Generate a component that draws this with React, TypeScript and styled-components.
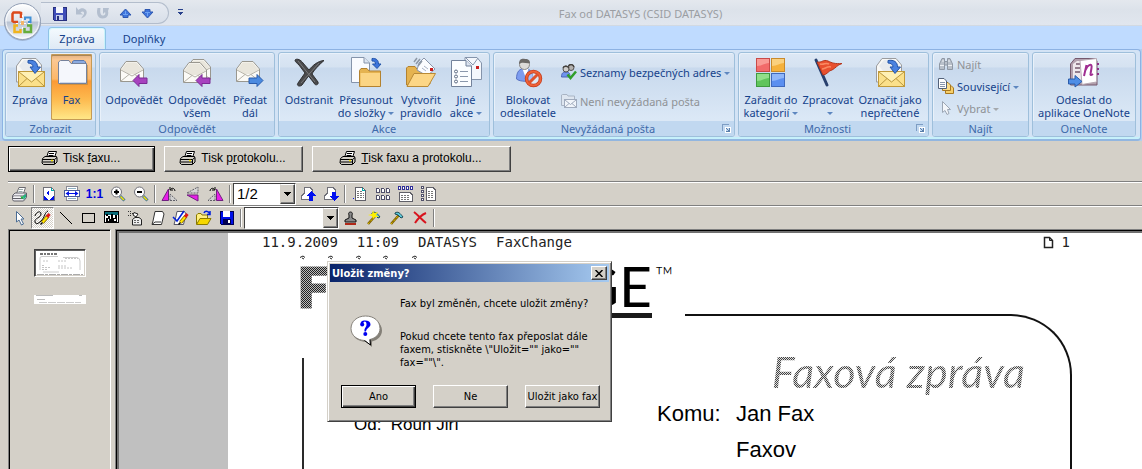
import React from "react";
import styled, { createGlobalStyle, css } from "styled-components";

const uiFont = '"Noto Sans", "Open Sans", sans-serif';
const dialogFont = '"DejaVu Sans Condensed", "Noto Sans", sans-serif';
const classicFont = '"Liberation Sans", Arial, sans-serif';
const face = "#d4d0c8";
const navy = "#15428b";

const GlobalStyle = createGlobalStyle`
  * { box-sizing: border-box; }
  body { margin: 0; background: ${face}; font-family: ${uiFont}; font-size: 11px; }
  button { font: inherit; color: inherit; margin: 0; }
  svg { display: block; flex: none; }
  p { margin: 0; }
`;

/* ---------- window frame ---------- */

const Window = styled.div`
  position: relative;
  display: flex;
  flex-direction: column;
  height: 100vh;
  overflow: hidden;
  background: ${face};
`;

const TitleBar = styled.header`
  display: flex;
  flex: none;
  height: 26px;
  padding: 2px 52px 1px 41px;
  background: linear-gradient(#e4e8ee, #dce2ea 40%, #e1e6ee);
  border-bottom: 1px solid #d2d9e2;
`;

const QuickAccess = styled.div`
  display: flex;
  align-items: center;
  flex: none;
  width: 128px;
  padding-left: 7px;
  border: 1px solid #b3bdcc;
  border-left: 0;
  border-radius: 0 12px 12px 0;
  background: linear-gradient(#e7ebf2, #d8dfe9);
`;

const QuickButton = styled.button`
  display: flex;
  align-items: center;
  justify-content: center;
  width: 22px;
  height: 20px;
  padding: 0;
  border: 0;
  background: none;
`;

const Title = styled.h1`
  flex: 1;
  margin: 0;
  font-size: 11px;
  font-weight: 400;
  line-height: 24px;
  text-align: center;
  color: #9b9ea3;
`;

const OfficeButton = styled.button`
  position: absolute;
  left: 3px;
  top: 2px;
  padding: 0;
  border: 0;
  background: none;
`;

const Tabs = styled.nav`
  display: flex;
  align-items: flex-end;
  flex: none;
  height: 23px;
  padding-left: 48px;
  background: #bfdbff;
`;

const Tab = styled.button<{ $active?: boolean }>`
  width: ${(p) => (p.$active ? 58 : 76)}px;
  height: 22px;
  padding: 0;
  border: 1px solid transparent;
  border-bottom: 0;
  border-radius: 4px 4px 0 0;
  background: none;
  color: ${navy};
  ${(p) =>
    p.$active &&
    css`
      border-color: #8fc3e6;
      background: linear-gradient(#f4fafe, #dfe9f5);
      box-shadow: inset 1px 1px 0 #d9fafd, inset -1px 0 0 #c9f3fb;
    `}
`;

/* ---------- ribbon ---------- */

const Ribbon = styled.section`
  display: flex;
  gap: 3px;
  flex: none;
  height: 92px;
  padding: 2px 3px 3px 2px;
  margin: 0 1px 0 2px;
  border: 1px solid #8db2e3;
  border-bottom: 2px solid #92b6e0;
  border-radius: 4px;
  background: #d3e3f5;
  box-shadow: inset 0 -2px 0 #c6f1fb, inset 1px 0 0 #d2f1fb;
`;

const RibbonBack = styled.div`
  flex: none;
  background: #b4cfee;
`;

const GroupBox = styled.div<{ $w: number }>`
  display: flex;
  flex-direction: column;
  flex: none;
  width: ${(p) => p.$w}px;
  height: 85px;
  border: 1px solid #9ebfdb;
  border-radius: 3px;
  background: linear-gradient(#dde8f5 0, #d5e2f1 14px, #c8d9ed 15px, #dbe8f6 66px);
  box-shadow: inset 1px 1px 0 #e9f1fa;
  overflow: hidden;
`;

const GroupBody = styled.div`
  display: flex;
  flex: 1;
  padding: 1px 3px;
`;

const GroupLabel = styled.div`
  display: flex;
  align-items: center;
  height: 15px;
  background: #c1d8f0;
  color: #3e6aaa;
  line-height: 15px;

  span {
    flex: 1;
    text-align: center;
  }

  button {
    padding: 0;
    margin-right: 3px;
    border: 0;
    background: none;
  }
`;

const BigButton = styled.button<{ $w: number; $on?: boolean }>`
  display: flex;
  flex-direction: column;
  align-items: center;
  flex: none;
  gap: 5px;
  width: ${(p) => p.$w}px;
  height: 66px;
  padding: 2px 0 0;
  border: 0;
  border-radius: 2px;
  background: none;
  color: ${navy};
  line-height: 13px;
  text-align: center;
  white-space: nowrap;
  ${(p) =>
    p.$on &&
    css`
      background: linear-gradient(#dfae80, #fbc893 6px, #fdb768 25px, #fb9a35 27px, #fdb94e 45px, #ffe98a);
      box-shadow: inset 0 0 0 1px #c59a55, inset 0 1px 0 1px #a98558;
    `}
`;

const SmallColumn = styled.div<{ $pad: number; $gap: number }>`
  display: flex;
  flex-direction: column;
  align-items: flex-start;
  gap: ${(p) => p.$gap}px;
  padding-top: ${(p) => p.$pad}px;
`;

const SmallButton = styled.button`
  display: flex;
  align-items: center;
  gap: 3px;
  height: 16px;
  padding: 0 2px;
  border: 0;
  background: none;
  color: ${navy};
  white-space: nowrap;

  &:disabled {
    color: #8f9296;
  }
`;

const Caret = styled.i<{ $dim?: boolean }>`
  display: inline-block;
  margin: 0 0 2px 3px;
  border: 3px solid transparent;
  border-top-color: ${(p) => (p.$dim ? "#a5a9ae" : "#5d86bf")};
  border-bottom: 0;
`;

/* ---------- print buttons and tool bars ---------- */

const raised = css`
  border: 1px solid;
  border-color: #fff #404040 #404040 #fff;
  box-shadow: inset -1px -1px 0 #808080;
  background: ${face};
`;

const raisedDefault = css`
  border: 1px solid #000;
  box-shadow: inset 1px 1px 0 #fff, inset -1px -1px 0 #404040, inset -2px -2px 0 #808080;
  background: ${face};
`;

const PrintRow = styled.div`
  display: flex;
  gap: 9px;
  flex: none;
  padding: 5px 8px 9px;
`;

const PrintButton = styled.button<{ $w: number; $default?: boolean }>`
  display: flex;
  align-items: center;
  justify-content: center;
  gap: 5px;
  width: ${(p) => p.$w}px;
  height: 26px;
  padding: 0 2px 2px 0;
  ${(p) => (p.$default ? raisedDefault : raised)}
  color: #000;
  font-family: ${classicFont};
  font-size: 12px;
`;

const ToolBar = styled.div`
  display: flex;
  align-items: center;
  flex: none;
  height: 24px;
  margin-left: 8px;
  border-top: 1px solid #808080;
  box-shadow: inset 0 1px 0 #fff;
`;

const Tool = styled.button<{ $on?: boolean }>`
  display: flex;
  align-items: center;
  justify-content: center;
  flex: none;
  width: 23px;
  height: 22px;
  padding: 0;
  border: 1px solid transparent;
  background: none;
  color: #0000e0;
  font-family: ${classicFont};
  font-size: 12px;
  font-weight: 700;
  ${(p) =>
    p.$on &&
    css`
      border-color: #808080 #fff #fff #808080;
      background: repeating-conic-gradient(#fff 0 25%, ${face} 0 50%) 0 0 / 2px 2px;
    `}
`;

const Divider = styled.span`
  flex: none;
  width: 2px;
  height: 18px;
  margin: 0 2px;
  border-left: 1px solid #808080;
  border-right: 1px solid #fff;
`;

const Combo = styled.label<{ $w: number }>`
  display: flex;
  flex: none;
  width: ${(p) => p.$w}px;
  height: 22px;
  border: 1px solid;
  border-color: #404040 #fff #fff #404040;
  background: #fff;

  select {
    flex: 1;
    min-width: 0;
    padding: 0 3px;
    border: 0;
    outline: 0;
    appearance: none;
    background: #fff;
    color: #000;
    font-family: ${classicFont};
    font-size: 15px;
  }

  span {
    display: flex;
    align-items: center;
    justify-content: center;
    width: 15px;
    ${raised}
    border-left-color: ${face};
  }
`;

/* ---------- document area ---------- */

const Workspace = styled.main`
  display: flex;
  flex: 1;
  gap: 4px;
  min-height: 0;
  padding-left: 8px;
`;

const ThumbPane = styled.aside`
  display: flex;
  flex-direction: column;
  align-items: center;
  gap: 18px;
  flex: none;
  width: 103px;
  padding-top: 19px;
  border: 1px solid #808080;
  border-right-color: #fff;
  border-bottom: 0;
  box-shadow: inset 1px 1px 0 #000;
`;

const Thumb = styled.button<{ $on?: boolean }>`
  width: 52px;
  padding: 0;
  border: 0;
  background: #fff;
  ${(p) =>
    p.$on &&
    css`
      border: 1px solid;
      border-color: #404040 #fff #fff #404040;
      box-shadow: inset 1px 1px 0 #606060, inset -1px -1px 0 ${face};
    `}
`;

const Viewer = styled.div`
  flex: 1;
  min-width: 0;
  padding: 3px 0 0 112px;
  border-top: 1px solid #808080;
  border-left: 1px solid #808080;
  background: #c0c0c0;
  box-shadow: inset 1px 1px 0 #000, inset 3px 3px 0 #707070;
`;

const Paper = styled.article`
  height: 100%;
  padding-left: 34px;
  background: #fff;
  color: #000;
  overflow: hidden;
`;

const FaxHeader = styled.div`
  display: flex;
  align-items: center;
  gap: 19px;
  max-width: 808px;
  height: 18px;
  font-family: "DejaVu Sans Mono", monospace;
  font-size: 14px;
  color: #222;
`;

const PageNumber = styled.span`
  display: flex;
  align-items: center;
  gap: 8px;
  margin-left: auto;
`;

const FaxBody = styled.div`
  display: grid;
  grid-template-columns: 385px 1fr;
  max-width: 810px;
  height: 100%;
  padding-left: 38px;
`;

const BodyLeft = styled.div`
  display: flex;
  flex-direction: column;
`;

const Logo = styled.div`
  display: flex;
  align-items: flex-start;
  justify-content: space-between;
  height: 95px;
  font-family: Lato, sans-serif;
  font-size: 57px;
  line-height: 44px;
`;

const LogoFax = styled.span`
  padding: 2px 0 16px;
  margin-left: -2px;
  font-size: 54px;
  font-weight: 900;
  color: transparent;
  -webkit-text-stroke: 3px transparent;
  background: repeating-conic-gradient(#222 0 25%, #bbb 0 50%) 0 0 / 2px 2px;
  background-clip: text;
`;

const LogoChange = styled.span`
  height: 55px;
  margin-left: auto;
  border-bottom: 5px solid #1a1a1a;
`;

const Trademark = styled.span`
  width: 33px;
  padding-left: 3px;
  font-size: 25px;
  font-weight: 300;
  line-height: 25px;
`;

const FrameLeft = styled.div`
  flex: 1;
  margin-left: 2px;
  padding: 57px 0 0 50px;
  border-left: 2px solid #2a2a2a;
  font-family: ${classicFont};
  font-size: 17px;
  line-height: 20px;
  white-space: pre;
`;

const FrameRight = styled.div`
  margin-top: 63px;
  border-top: 2px solid #111;
  border-right: 2px solid #111;
  border-radius: 0 61px 0 0;
`;

const FaxTitle = styled.h2`
  margin: 32px 45px 0 0;
  font-family: Lato, sans-serif;
  font-size: 43px;
  font-style: italic;
  font-weight: 400;
  line-height: 48px;
  text-align: right;
  white-space: nowrap;
  color: transparent;
  background: repeating-conic-gradient(#444 0 25%, #ddd 0 50%) 0 0 / 2px 2px;
  background-clip: text;
`;

const Recipient = styled.dl`
  display: grid;
  grid-template-columns: 79px 1fr;
  margin: 0 0 0 -28px;
  font-family: ${classicFont};
  font-size: 22px;
  line-height: 36px;

  dd {
    grid-column: 2;
    margin: 0;
  }
`;

/* ---------- dialog ---------- */

const Dialog = styled.div`
  position: absolute;
  left: 327px;
  top: 261px;
  width: 285px;
  padding: 2px;
  border: 1px solid;
  border-color: ${face} #404040 #404040 ${face};
  background: ${face};
  box-shadow: inset 1px 1px 0 #fff, inset -1px -1px 0 #808080;
  color: #000;
  font-family: ${dialogFont};
  font-size: 11px;
  line-height: 13px;
`;

const DialogTitle = styled.div`
  display: flex;
  align-items: center;
  justify-content: space-between;
  height: 18px;
  padding: 0 2px;
  background: linear-gradient(90deg, #0a246a, #a6caf0);
  color: #fff;
  font-weight: 700;
`;

const CloseButton = styled.button`
  display: flex;
  align-items: center;
  justify-content: center;
  width: 16px;
  height: 14px;
  padding: 0;
  ${raised}
`;

const DialogContent = styled.div`
  display: flex;
  gap: 17px;
  padding: 15px 10px 16px 20px;

  svg {
    margin-top: 18px;
  }

  p + p {
    margin-top: 20px;
  }
`;

const DialogButtons = styled.div`
  display: flex;
  justify-content: space-between;
  padding: 0 9px 11px 11px;
`;

const DialogButton = styled.button<{ $default?: boolean }>`
  width: 75px;
  height: 23px;
  padding: 0;
  white-space: nowrap;
  ${(p) => (p.$default ? raisedDefault : raised)}
`;

/* ---------- drawings ---------- */

type ArtProps = { w?: number; h?: number; crisp?: boolean; children: React.ReactNode };

const Art = ({ w = 32, h = w, crisp, children }: ArtProps) => (
  <svg
    width={w}
    height={h}
    viewBox={`0 0 ${w} ${h}`}
    fill="none"
    aria-hidden="true"
    shapeRendering={crisp ? "crispEdges" : "auto"}
  >
    {children}
  </svg>
);

const OpenEnvelope = ({ x = 0, y = 0 }: { x?: number; y?: number }) => (
  <g transform={`translate(${x} ${y})`} strokeLinejoin="round">
    <path d="M2.500 13 8 5.500H19L25.500 13V25.500H2.500Z" fill="#fbfaf6" stroke="#99978f" />
    <path d="M3.500 13.500 8.500 6.500H18.500L24.500 13.500 17 18H11Z" fill="#e9e6dc" />
    <path d="M3 14 14 20 25 14M3 25 11 18.500M25 25 17 18.500" stroke="#b5b2a8" />
  </g>
);

const arrowLeft = "M15 24.500 21 18.500V22H29V27.500H21V30.500Z";

const ReadMailIcon = () => (
  <Art>
    <path d="M2.500 10 8 2.500H22L27.500 9V26H2.500Z" fill="#f8f8f6" stroke="#9b9c9e" />
    <path d="M5 10 10 4H20L26 10 19 15H9Z" fill="#e8ebee" />
    <rect x="4.500" y="15.500" width="26" height="15" fill="#fbe08a" stroke="#c19a3a" />
    <path d="M5 16H30L18 25.500Z" fill="#fff0b4" />
    <path d="M5 16 17.500 26 30 16M5 30 13 22.500M30 30 22 22.500" stroke="#b99740" />
    <path d="M14 4.500C20 3.500 23.500 6 23.500 11H26.500L21 17.500 16 11H19C19 8.500 17 7 14 7Z" fill="#4a82e0" stroke="#2354a8" />
  </Art>
);

const FaxFolderIcon = () => (
  <Art>
    <path d="M16.500 10V5.500L18 4.500H28L29.500 6V10Z" fill="#8cabe0" stroke="#5d79ad" />
    <path d="M2.500 27.500V6L4.500 4.500H13L15 7.500H30.500V27.500Z" fill="#f5f7fc" stroke="#76829c" />
    <path d="M4 26.500H30" stroke="#ccd6e8" />
    <path d="M3.500 28.500H31.500V9" stroke="#a5803f" opacity=".5" />
  </Art>
);

const ReplyIcon = () => (
  <Art>
    <OpenEnvelope />
    <path d={arrowLeft} fill="#a742bf" stroke="#7a2a94" />
  </Art>
);

const ReplyAllIcon = () => (
  <Art>
    <OpenEnvelope x={4} y={-2} />
    <OpenEnvelope x={0} y={1} />
    <path d={arrowLeft} fill="#a742bf" stroke="#7a2a94" />
  </Art>
);

const ForwardIcon = () => (
  <Art>
    <OpenEnvelope />
    <path d={arrowLeft} transform="matrix(-1 0 0 1 44 0)" fill="#4a8ae0" stroke="#2b5cab" />
  </Art>
);

const DeleteIcon = () => (
  <Art>
    <path d="M2 4C4 2 8 4 10 7L16 14C20 9 25 5 31 4.500 26 9 21 14 19 18L25 26C26 29 22 30 21 27L15.500 20 9 29C7 31 3 30 5 27L12 17 6 9C4 7 2 6 2 4Z" fill="#4a4a4c" stroke="#2f2f31" />
    <path d="M5 5 22 26M26 7 8 27" stroke="#79797b" />
  </Art>
);

const MoveIcon = () => (
  <Art>
    <path d="M1.500 1.500H14L19.500 7V26.500H1.500Z" fill="#f9fbff" stroke="#8594ab" />
    <path d="M14 1.500V7H19.500" fill="#dce4f1" stroke="#8594ab" />
    <path d="M9.500 30.500V14.500L11 12.500H17L19 15H30.500V30.500Z" fill="#e5b350" stroke="#b38230" />
    <rect x="10.500" y="17" width="19.500" height="13" fill="#fbd584" />
    <path d="M22 2.500C26 2 28.500 4 28.500 8H31L27 12.500 22.500 8H25.500C25.500 6 24.500 5 22 5Z" fill="#3c74dc" stroke="#2354a8" />
  </Art>
);

const RuleIcon = () => (
  <Art>
    <path d="M1.500 29V12L3 10.500H10L12 13H25V28Z" fill="#e5b350" stroke="#b38230" />
    <path d="M14 7 19 2 30 13 22 20 12 14Z" fill="#fbfcff" stroke="#8a96ab" />
    <path d="M9 6 12 2M11 8 15 3M13 10 17 5" stroke="#8d97a5" strokeWidth="1.500" />
    <path d="M17 12 21 15M19 10 23 13" stroke="#a8b2c5" />
    <rect x="25" y="12" width="3" height="3" fill="#c81e1e" />
    <path d="M2 30.500 9 17.500H30.500L23 30.500Z" fill="#fcd686" stroke="#b98a36" />
  </Art>
);

const OtherActionsIcon = () => (
  <Art>
    <path d="M15 1.500H27L31.500 7V23.500H15Z" fill="#f4f7fc" stroke="#8594ab" />
    <path d="M16 2 23 9 28 2" stroke="#8594ab" />
    <rect x="26" y="10" width="3" height="3" fill="#c81e1e" />
    <path d="M1.500 4.500H16L21.500 10V30.500H1.500Z" fill="#fbfdff" stroke="#73829b" />
    <path d="M16 4.500V10H21.500" fill="#dce4f1" stroke="#73829b" />
    <g stroke="#5e6c84">
      <circle cx="6" cy="15.500" r="1.500" />
      <circle cx="6" cy="20.500" r="1.500" />
      <circle cx="6" cy="25.500" r="1.500" />
      <path d="M10 15.500H18M10 20.500H18M10 25.500H18" stroke="#8b98ac" />
    </g>
  </Art>
);

const BlockSenderIcon = () => (
  <Art>
    <path d="M4.500 23C4.500 15 8 12.500 12.500 12.500S21 15 21 23C18 26 8 26 4.500 23Z" fill="#7c9cf0" stroke="#5a74c4" />
    <path d="M10.500 13 13.500 21 16.500 13Z" fill="#fff" />
    <circle cx="12.500" cy="8.500" r="5" fill="#dcdad8" stroke="#8a8785" />
    <path d="M7 8C7 3 10 2.500 13 3 17 3 18 5 18 7 14 8 11 5 7 8Z" fill="#6b6866" />
    <circle cx="21.500" cy="22.500" r="7" fill="#fff" fillOpacity=".35" stroke="#c23a1a" strokeWidth="3.500" />
    <circle cx="21.500" cy="22.500" r="7" stroke="#ef6238" strokeWidth="2" />
    <path d="M17 27 26 18" stroke="#e0532c" strokeWidth="3" />
  </Art>
);

const SafeListIcon = () => (
  <Art w={16}>
    <path d="M.500 13C.500 9 2 8 5 8S9 9 9 13Z" fill="#6f93ee" stroke="#4b66b4" />
    <circle cx="10" cy="3.500" r="3" fill="#b4b2b0" stroke="#55524f" />
    <circle cx="5" cy="5" r="3" fill="#cfcdcb" stroke="#55524f" />
    <path d="M2 4C3 2 6 1.500 8 4M7.500 2C9 0 12 0 13 3" stroke="#45423f" strokeWidth="1.500" />
    <path d="M6.500 10.500 9.500 14 15 7.500" stroke="#2f9e2a" strokeWidth="2.500" />
  </Art>
);

const NotJunkIcon = () => (
  <Art w={16}>
    <path d="M.500 12.500V2L1.500 1.500H6L7 3H13.500V12.500Z" fill="#dee6f0" stroke="#a9b4c4" />
    <rect x="3.500" y="6.500" width="12" height="8" fill="#f1f5fa" stroke="#a0abbd" />
    <path d="M4 7 9.500 11.500 15 7M4 14 8 10.500M15 14 11 10.500" stroke="#a0abbd" />
  </Art>
);

const CategoriesIcon = () => (
  <Art>
    {[
      ["1", "2", "#f26a6a", "#f99a95", "#c94a48"],
      ["16", "2", "#f5b13c", "#fad07e", "#c98a2b"],
      ["1", "17", "#5fc55c", "#92df8a", "#3e9a40"],
      ["16", "17", "#5b8ff0", "#8fb6fa", "#3f69bd"],
    ].map(([x, y, fill, light, edge]) => (
      <g key={x + y} transform={`translate(${x} ${y})`}>
        <rect x=".500" y=".500" width="13" height="13" fill={fill} stroke={edge} />
        <path d="M1 1H13V5C9 5 6 8 1 8Z" fill={light} />
      </g>
    ))}
  </Art>
);

const FlagIcon = () => (
  <Art>
    <path d="M4 4 15 29" stroke="#28406e" strokeWidth="3" strokeLinecap="round" />
    <path d="M5 6C10 7 11 3 16 5 20 7 23 8 30 7.500 25 9 24 12 20 14 17 14 15 19 11 19Z" fill="#e8502e" stroke="#b5361c" />
    <path d="M8 8C13 9 13 6 17 8M10 13C13 13 15 10 19 11" stroke="#fa8a62" strokeWidth="1.500" />
  </Art>
);

const FindIcon = () => (
  <Art w={16}>
    <g fill="#b9c0ca" stroke="#8f98a5">
      <path d="M1.500 13.500V8L4 2.500H6.500V13.500Z" />
      <path d="M14.500 13.500V8L12 2.500H9.500V13.500Z" />
      <path d="M6.500 5.500H9.500V9H6.500Z" />
    </g>
    <path d="M2 9.500H6M10 9.500H14M4 5H6M10 5H12" stroke="#eef1f5" />
  </Art>
);

const RelatedIcon = () => (
  <Art w={16}>
    <path d="M7.500 7.500H13L15.500 10V15.500H7.500Z" fill="#f7cf6a" stroke="#a87820" />
    <path d="M4.500 4.500H10L12.500 7V12.500H4.500Z" fill="#fbdc8a" stroke="#a87820" />
    <path d="M.500.500H6L8.500 3V10.500H.500Z" fill="#fff" stroke="#53627a" />
    <path d="M2 4.500H7M2 6.500H7M2 8.500H7" stroke="#8896ac" />
  </Art>
);

const SelectIcon = () => (
  <Art w={16}>
    <path d="M4.500 1.500V12.500L7 10.500 9 14.500 11 13.500 9.500 9.500H12.500Z" fill="#f3f6fa" stroke="#9ca6b4" />
  </Art>
);

const OneNoteIcon = () => (
  <Art>
    <path d="M2.500 29V8L7 2.500H27L29 5V29Z" fill="#b3a0ae" stroke="#75596d" />
    <path d="M5 8 9 5H22V27H5Z" fill="#eee7ec" />
    <path d="M8 8H12M7 12H12M7 16H12" stroke="#75596d" strokeWidth="1.500" />
    <path d="M12 4.500 28.500 2.500V26L14 28.500Z" fill="#fff" stroke="#b7a9b3" />
    <path d="M16 20 18.500 9M17.500 14C20 8 24.500 7 23.500 12L22.500 18Q22 20 25 18" stroke="#a02f92" strokeWidth="2" />
    <path d="M29 8H31M29 13H31M29 18H31" stroke="#8d2f86" strokeWidth="2" />
    <path d="M.500 23H7V19.500L14 25.500 7 31V28H.500Z" fill="#4f8ee6" stroke="#2b5cab" />
  </Art>
);

const LauncherIcon = () => (
  <Art w={9} crisp>
    <path d="M.500 7V.500H7" stroke="#7d9dc4" />
    <path d="M3 3.500H8.500V8.500H3.500V3" stroke="#fff" />
    <path d="M4 4 7 7M7.500 4V7.500H4" stroke="#5a7eaa" />
  </Art>
);

const OfficeOrb = () => (
  <Art w={40}>
    <defs>
      <linearGradient id="orb" x1="0" y1="0" x2="0" y2="1">
        <stop offset="0" stopColor="#fff" />
        <stop offset=".48" stopColor="#dfe4ec" />
        <stop offset=".52" stopColor="#b9c3d3" />
        <stop offset="1" stopColor="#f6f9fd" />
      </linearGradient>
    </defs>
    <circle cx="19.500" cy="20.500" r="18.500" fill="#7686a0" opacity=".45" />
    <circle cx="19.500" cy="19.500" r="18" fill="url(#orb)" stroke="#929fb5" />
    <circle cx="19.500" cy="19.500" r="16.500" stroke="#fff" strokeOpacity=".8" />
    <g strokeWidth="2.500" fill="none">
      <path d="M18 16V11L16.500 10.500H10.500L9.500 12V19L11 20H15" stroke="#dc4a1c" />
      <path d="M22 18V15.500H27.500V20H25" stroke="#3f8fd6" strokeWidth="2" />
      <path d="M15 23.500H11.500V30H17.500V27" stroke="#f0b41f" />
      <path d="M24 23.500H28V30H21.500V26" stroke="#66ad3c" />
    </g>
    <path d="M19.500 13V27M13 21.500H27" stroke="#fff" strokeDasharray="2 2" />
    <path d="M18 19H21V23H18Z" fill="#f3b56a" />
  </Art>
);

const RibbonSaveIcon = () => (
  <Art w={15} crisp>
    <path d="M1 1H14V14H2L1 13Z" fill="#3f4db8" stroke="#27307e" />
    <path d="M4 1H11V7H4Z" fill="#f4f6fc" />
    <path d="M4 9H11V14H4Z" fill="#c7cfe9" />
    <path d="M5 10H7V14H5Z" fill="#27307e" />
  </Art>
);

const UndoIcon = () => (
  <Art w={14}>
    <path d="M2 1V8.500H9L6.500 6.500C8.500 4.500 10.500 5.500 10 8L7 12.500C12 11 14 7 12 4 9.500 1.500 6.500 2 4.500 4Z" fill="#b4bfcf" />
  </Art>
);

const RedoIcon = () => (
  <Art w={14}>
    <path d="M4.500 2H1.500C0 8 2 12.500 6.500 12.500S13 9 12 5L13 2H7V8L9 6C10 8.500 8.500 9.500 7 9.500S3.500 8 4.500 2Z" fill="#b4bfcf" />
  </Art>
);

const TriangleIcon = ({ down }: { down?: boolean }) => (
  <Art w={13}>
    <g transform={down ? "matrix(1 0 0 -1 0 13)" : undefined}>
      <path d="M6.500 2 12 8H9V10.500H4V8H1Z" fill="#3f74dc" stroke="#2d57b0" />
      <path d="M4 7.500H9M6.500 4V7" stroke="#6da2f3" />
    </g>
  </Art>
);

const CustomizeIcon = () => (
  <Art w={7} crisp>
    <path d="M1 .500H6" stroke="#27408b" />
    <path d="M1 3H6L3.500 6Z" fill="#27408b" />
  </Art>
);

const PrinterIcon = () => (
  <Art w={17} h={16}>
    <path d="M5.500 7.500 7.500 1.500H15.500L13.500 7.500Z" fill="#fff" stroke="#000" />
    <path d="M8 3.500H13M7.500 5.500H12.500" stroke="#000" />
    <path d="M1.500 8.500 4 6.500H15.500L16 8V12L13.500 14.500H2.500L1 13Z" fill={face} stroke="#000" />
    <path d="M1.500 9.500H13.500L16 7.500M1.500 12H13.500M13.500 9.500V14" stroke="#000" />
    <path d="M10 10.500H12" stroke="#f2e500" strokeWidth="1.500" />
  </Art>
);

const ToolPrinterIcon = () => (
  <Art w={17} h={16}>
    <path d="M5.500 7.500 8 1.500H14.500L12.500 7.500Z" fill="#fff" stroke="#6b6b70" />
    <path d="M8 3.500H12M7.500 5.500H11.500" stroke="#9aa" />
    <path d="M1.500 9.500 4 7H15.500V11.500L12.500 15H2.500L1.500 13.500Z" fill="#eceaf0" stroke="#606068" />
    <path d="M2 10H12.500L15 7.500M2 12.500H12.500" stroke="#606068" />
    <path d="M3 11H9" stroke="#fff" />
    <path d="M12 10 15 8V11L12.500 14Z" fill="#20b080" />
    <path d="M10 11.500H12" stroke="#20c040" strokeWidth="2" />
  </Art>
);

const FitPageIcon = () => (
  <Art w={16} crisp>
    <path d="M2.500 1.500H10L13.500 4.500V14.500H2.500Z" fill="#fff" stroke="#707078" />
    <path d="M10 1.500V4.500H13" stroke="#0aa" />
    <path d="M5 7 8 4V10ZM13 9V14H8Z" fill="#0010e8" transform="translate(0 0)" />
    <path d="M3 10 7 14H3Z" fill="#0010e8" />
  </Art>
);

const FitWidthIcon = () => (
  <Art w={16}>
    <rect x="2.500" y=".500" width="11" height="14" fill="#fff" stroke="#8a8a94" />
    <path d="M4 2.500H12M4 12.500H12" stroke="#8fb0c4" />
    <rect x=".500" y="4.500" width="15" height="6" fill="#fff" stroke="#4a5a9a" />
    <path d="M4 7.500H12" stroke="#0010e8" />
    <path d="M1.500 7.500 5 5V10ZM14.500 7.500 11 5V10Z" fill="#0010e8" />
  </Art>
);

const MagnifyIcon = ({ plus }: { plus?: boolean }) => (
  <Art w={16}>
    <path d="M10 10 14.500 14.500" stroke="#3f6f9f" strokeWidth="3" />
    <path d="M10.500 10.500 14 14" stroke="#f2e500" strokeWidth="1.500" />
    <circle cx="6.500" cy="6" r="5" fill="#fff" stroke="#707078" />
    <path d={plus ? "M4 6H9M6.500 3.500V8.500" : "M4 6H9"} stroke="#000" strokeWidth="2" />
  </Art>
);

const RotateLeftIcon = () => (
  <Art w={17} h={16}>
    <path d="M1 14.500H7.500V3Z" fill="#e81ee8" stroke="#702080" />
    <path d="M9 14.500H16L9 8Z" fill="#d0d0d0" stroke="#606068" strokeDasharray="2 1" />
    <path d="M9.500 3.500C11 1.500 13.500 2 14 5M9 1V4H12" stroke="#000" />
  </Art>
);

const FlipIcon = () => (
  <Art w={16}>
    <path d="M2 7 13 1V7Z" fill="#d6d6d6" stroke="#606068" strokeDasharray="2 1" />
    <path d="M2 9 13 15V9Z" fill="#e81ee8" stroke="#702080" />
  </Art>
);

const RotateRightIcon = () => (
  <Art w={17} h={16}>
    <path d="M16 14.500H9.500V3Z" fill="#e81ee8" stroke="#702080" />
    <path d="M8 14.500H1L8 8Z" fill="#d0d0d0" stroke="#606068" strokeDasharray="2 1" />
    <path d="M3 5C3.500 2 6 1.500 7.500 3.500M8 1V4H5" stroke="#000" />
  </Art>
);

const PageMoveIcon = ({ down }: { down?: boolean }) => (
  <Art w={16} crisp>
    <path d="M4.500 1.500H10L12.500 4V13.500H1.500V10L4.500 7Z" fill="#fff" stroke="#707078" />
    <path d={down ? "M9 6H13V10H16L11 15 6 10H9Z" : "M11 5 16 10H13V15H9V10H6Z"} fill="#0010f0" />
  </Art>
);

const TextPageIcon = () => (
  <Art w={16} crisp>
    <path d="M1 12.500H2" stroke="#0010f0" />
    <path d="M3.500 1.500H10L13.500 4.500V14.500H3.500Z" fill="#fff" stroke="#606068" />
    <path d="M5 5.500H10M5 7.500H12M5 9.500H12M5 11.500H12" stroke="#777" strokeDasharray="2 1" />
    <path d="M10 1.500V4.500H13" stroke="#0aa" />
  </Art>
);

const miniPage = (x: number, y: number) => (
  <path
    key={`${x}-${y}`}
    d={`M${x + 0.5} ${y + 0.5}h2l1 1v3h-3Z`}
    fill="#fff"
    stroke="#50506a"
  />
);

const ThumbGridIcon = () => (
  <Art w={16} crisp>{[2, 9].flatMap((y) => [1, 6, 11].map((x) => miniPage(x, y)))}</Art>
);

const ThumbTopIcon = () => (
  <Art w={16} crisp>
    {[0, 4, 8, 12].map((x) => (
      <rect key={x} x={x + 0.5} y=".500" width="2" height="3" fill="#fff" stroke="#30309a" />
    ))}
    <path d="M1.500 6.500H12L14.500 9V15.500H1.500Z" fill="#fff" stroke="#606068" />
    <path d="M3 9.500H12M3 11.500H12M3 13.500H12" stroke="#777" strokeDasharray="2 1" />
  </Art>
);

const ThumbLeftIcon = () => (
  <Art w={16} crisp>
    {[0, 4, 8, 12].map((y) => (
      <rect key={y} x=".500" y={y + 0.5} width="2" height="2" fill="#fff" stroke="#50506a" />
    ))}
    <path d="M5.500 1.500H12L14.500 4V14.500H5.500Z" fill="#fff" stroke="#606068" />
    <path d="M7 5.500H12M7 7.500H13M7 9.500H13M7 11.500H13" stroke="#777" strokeDasharray="2 1" />
  </Art>
);

const PointerIcon = () => (
  <Art w={16}>
    <path d="M4.500 1.500V12L7 10 9.500 15 11.500 14 9 9H12Z" fill="#fff" stroke="#4a6c94" />
  </Art>
);

const Pencil = () => (
  <g>
    <path d="M8.500 12.500 14 6" stroke="#806000" strokeWidth="3.500" />
    <path d="M8.500 12.500 14 6" stroke="#ffe600" strokeWidth="2" />
    <path d="M13 7 15.500 4" stroke="#e01818" strokeWidth="3" />
    <path d="M6.500 14.500 8.500 12.500" stroke="#000" strokeWidth="1.500" />
  </g>
);

const FreehandIcon = () => (
  <Art w={17} h={16}>
    <path d="M1 6C2 2 7 0 7 4S0 8 1 12 6 12 8 10 11 2 14 1" stroke="#000" />
    <Pencil />
  </Art>
);

const LineIcon = () => (
  <Art w={14}>
    <path d="M1 1 13 13" stroke="#000" />
  </Art>
);

const RectIcon = () => (
  <Art w={14} crisp>
    <rect x=".500" y="2.500" width="12" height="9" stroke="#000" />
  </Art>
);

const PictureIcon = () => (
  <Art w={15} crisp>
    <rect x=".500" y="1.500" width="14" height="11" fill="#fff" stroke="#000" />
    <path d="M1 2H14V5H1Z" fill="#0a6a78" />
    <path d="M2 12V8H4V6H6V9H7V4H9V8H11V5H13V12ZM2 4H4V6H2Z" fill="#000" />
    <path d="M10 9H12V11H10ZM4 9H5V11H4Z" fill="#fff" />
  </Art>
);

const SprayIcon = () => (
  <Art w={16}>
    <path d="M1 1.500H5M1 5.500H5M3 3.500H7" stroke="#333" strokeDasharray="1 1" />
    <path d="M7 2.500 11 4 9 7 6 5Z" fill="#fff" stroke="#222" />
    <path d="M5.500 15V9.500L8 7.500H12L14.500 9.500V15Z" fill="#eee" stroke="#222" />
    <path d="M7 10.500H13M7 12.500H13" stroke="#666" strokeDasharray="2 1" />
  </Art>
);

const EraserPageIcon = () => (
  <Art w={16}>
    <path d="M5 1.500H12.500L14 4 11.500 14.500H2L3 11Z" fill="#fff" stroke="#333" />
    <path d="M2 14.500 5 12H11" stroke="#333" />
  </Art>
);

const CheckPageIcon = () => (
  <Art w={17} h={16}>
    <path d="M5 1.500H12.500L14 4 11.500 14.500H2L3 11Z" fill="#fff" stroke="#556" />
    <path d="M1 7 5 11 12 1" stroke="#0020d8" strokeWidth="1.500" />
    <Pencil />
  </Art>
);

const OpenFolderIcon = () => (
  <Art w={17} h={16}>
    <path d="M1.500 14V5L3 3.500H6L7 5H12.500V8" fill="#ffef80" stroke="#8a7a00" />
    <path d="M1.500 14.500 5 8.500H16L12.500 14.500Z" fill="#f6d800" stroke="#8a7a00" />
    <path d="M9 3C10 .500 13 .500 14.500 3.500M15 1V4.500H12" stroke="#0020d8" strokeWidth="1.500" />
  </Art>
);

const DiskIcon = () => (
  <Art w={15} crisp>
    <path d="M1 1H14V14H2L1 13Z" fill="#0010e8" stroke="#000050" />
    <path d="M4 1H11V7H4Z" fill="#fff" />
    <path d="M4 9H12V14H4Z" fill="#000050" />
    <path d="M9 10H11V13H9Z" fill="#fff" />
  </Art>
);

const StampIcon = () => (
  <Art w={15} h={16}>
    <path d="M6 8V5C4 1 11 1 9 5V8L13 10V12H2V10Z" fill="#8a8a8a" stroke="#111" />
    <path d="M2 14H13" stroke="#b02818" strokeWidth="2" />
  </Art>
);

const HammerIcon = ({ star }: { star?: boolean }) => (
  <Art w={16}>
    <path d="M2 14 10 5" stroke="#806000" strokeWidth="2.500" />
    <path d="M2 14 10 5" stroke="#ffe600" strokeDasharray="1 1" />
    <path d="M6 3C9 1 11 3 14 7L12 8 9 5 6 4Z" fill="#5cc8d8" stroke="#1c4b58" />
    {star && <path d="M7 0 8 3 12 2 10 5 13 7 9 7 7 9 6 6 2 5 6 4Z" fill="#fff000" />}
  </Art>
);

const CrossIcon = () => (
  <Art w={14}>
    <path d="M1 1C5 4 9 9 13 12M13 2C8 4 4 9 2 12" stroke="#d8141e" strokeWidth="2" />
  </Art>
);

const ComboArrow = () => (
  <Art w={7} h={4} crisp>
    <path d="M0 0H7L3.500 4Z" fill="#000" />
  </Art>
);

const CloseIcon = () => (
  <Art w={8} h={7}>
    <path d="M.500 0 7.500 7M7.500 0 .500 7" stroke="#000" strokeWidth="1.500" />
  </Art>
);

const QuestionIcon = () => (
  <Art w={33} h={32}>
    <path d="M17 3C25 3 32 8 32 15.500 32 21 28 25 22 26.500V32L17 27C8 27 2 22 2 15.500Z" fill="#848078" />
    <path d="M15.500 1C24 1 30 6 30 13.500 30 19 26 23 20 24.500L20.500 30 14.500 25.500C7 25 1 20.500 1 13.500S7 1 15.500 1Z" fill="#fff" stroke="#85817a" />
    <path d="M20 24.500 20.500 30 14.500 25.500" stroke="#000" />
    <path d="M11 10C10 6.500 12 5.500 15 5.500 18.500 5.500 20.500 7 20.500 9.500 20.500 12.500 16.500 13 16 16.500H14.500C14 13 16.500 12.500 16.500 9.500 16.500 7.500 16 6.500 14.500 6.500Z" fill="#0000f0" />
    <circle cx="12.200" cy="9.500" r="2" fill="#0000f0" />
    <circle cx="15.300" cy="19" r="2" fill="#0000f0" />
  </Art>
);

const ScanMarks = () => (
  <Art w={120} h={12}>
    {[2, 30, 58, 85, 114].map((x) => (
      <path key={x} d={`M${x - 2} 6.500L${x + 1} 5M${x} 7L${x + 2} 8M${x + 1} 5L${x + 3} 6.500`} stroke="#222" />
    ))}
  </Art>
);

const SheetIcon = () => (
  <Art w={11} h={13}>
    <path d="M1.500 1.500H6.500L9.500 4.500V11.500H1.500Z" stroke="#222" strokeWidth="1.500" />
    <path d="M6.500 1.500V4.500H9.500" stroke="#222" />
  </Art>
);

const FirstPageArt = () => (
  <Art w={50} h={26}>
    <path d="M5 4H23" stroke="#777" strokeWidth="2" strokeDasharray="3 1 2 1" />
    <path d="M5 20V8Q5 6.500 7 6.500H23M28 7.500H42Q45 8 45 11V20M8 22H24" stroke="#ccc" />
    <path d="M8 11H14M23 11H31M30 8.500H43M7 15.500H10M7 17.500H16M7 19.500H12M23 16H31M23 18H38" stroke="#c4c4c4" strokeDasharray="2 1" />
    <path d="M2 24.500H48" stroke="#aaa" strokeDasharray="7 1 3 1" />
  </Art>
);

const SecondPageArt = () => (
  <Art w={52} h={9}>
    <path d="M2 .500H19M45 .500H48M3 4.500H11" stroke="#bbb" />
    <path d="M5 7.500H47" stroke="#ccc" strokeDasharray="8 1" />
  </Art>
);

/* ---------- composition ---------- */

type GroupProps = { label: string; w: number; launcher?: boolean; children: React.ReactNode };

const Group = ({ label, w, launcher, children }: GroupProps) => (
  <GroupBox $w={w} role="group" aria-label={label}>
    <GroupBody>{children}</GroupBody>
    <GroupLabel>
      <span>{label}</span>
      {launcher && (
        <button aria-label={`${label} – další možnosti`}>
          <LauncherIcon />
        </button>
      )}
    </GroupLabel>
  </GroupBox>
);

type BigProps = { icon: React.ReactNode; lines: string[]; w: number; menu?: boolean; on?: boolean };

const Big = ({ icon, lines, w, menu, on }: BigProps) => (
  <BigButton $w={w} $on={on}>
    {icon}
    <span>
      {lines[0]}
      {lines[1] !== undefined && <br />}
      {lines[1]}
      {menu && <Caret />}
    </span>
  </BigButton>
);

type ToolItem = [string, React.ReactNode];

const viewTools: ToolItem[][] = [
  [["Tisk", <ToolPrinterIcon />]],
  [
    ["Celá stránka", <FitPageIcon />],
    ["Šířka stránky", <FitWidthIcon />],
    ["Skutečná velikost", "1:1"],
    ["Zvětšit", <MagnifyIcon plus />],
    ["Zmenšit", <MagnifyIcon />],
  ],
  [
    ["Otočit vlevo", <RotateLeftIcon />],
    ["Překlopit", <FlipIcon />],
    ["Otočit vpravo", <RotateRightIcon />],
  ],
];

const pageTools: ToolItem[][] = [
  [
    ["Předchozí stránka", <PageMoveIcon />],
    ["Další stránka", <PageMoveIcon down />],
  ],
  [
    ["Stránka", <TextPageIcon />],
    ["Náhledy", <ThumbGridIcon />],
    ["Náhledy nahoře", <ThumbTopIcon />],
    ["Náhledy vlevo", <ThumbLeftIcon />],
  ],
];

const drawTools: ToolItem[] = [
  ["Výběr", <PointerIcon />],
  ["Kreslení", <FreehandIcon />],
  ["Čára", <LineIcon />],
  ["Obdélník", <RectIcon />],
  ["Obrázek", <PictureIcon />],
  ["Sprej", <SprayIcon />],
  ["Guma", <EraserPageIcon />],
  ["Úpravy", <CheckPageIcon />],
  ["Otevřít", <OpenFolderIcon />],
  ["Uložit", <DiskIcon />],
];

const stampTools: ToolItem[] = [
  ["Razítko", <StampIcon />],
  ["Nové razítko", <HammerIcon star />],
  ["Upravit razítko", <HammerIcon />],
  ["Odstranit razítko", <CrossIcon />],
];

const Tools = ({ items, pressed }: { items: ToolItem[]; pressed?: string }) => (
  <>
    {items.map(([name, icon]) => (
      <Tool key={name} aria-label={name} $on={name === pressed}>
        {icon}
      </Tool>
    ))}
  </>
);

export default function App() {
  return (
    <Window>
      <GlobalStyle />
      <TitleBar>
        <QuickAccess>
          <QuickButton aria-label="Uložit"><RibbonSaveIcon /></QuickButton>
          <QuickButton aria-label="Zpět"><UndoIcon /></QuickButton>
          <QuickButton aria-label="Znovu"><RedoIcon /></QuickButton>
          <QuickButton aria-label="Předchozí položka"><TriangleIcon /></QuickButton>
          <QuickButton aria-label="Další položka"><TriangleIcon down /></QuickButton>
        </QuickAccess>
        <QuickButton aria-label="Přizpůsobit panel"><CustomizeIcon /></QuickButton>
        <Title>Fax od DATASYS (CSID DATASYS)</Title>
      </TitleBar>
      <OfficeButton aria-label="Tlačítko Office"><OfficeOrb /></OfficeButton>
      <Tabs>
        <Tab $active>Zpráva</Tab>
        <Tab>Doplňky</Tab>
      </Tabs>

      <RibbonBack>
        <Ribbon>
          <Group label="Zobrazit" w={91}>
            <Big w={42} icon={<ReadMailIcon />} lines={["Zpráva"]} />
            <Big w={41} icon={<FaxFolderIcon />} lines={["Fax"]} on />
          </Group>
          <Group label="Odpovědět" w={176}>
            <Big w={62} icon={<ReplyIcon />} lines={["Odpovědět"]} />
            <Big w={64} icon={<ReplyAllIcon />} lines={["Odpovědět", "všem"]} />
            <Big w={42} icon={<ForwardIcon />} lines={["Předat", "dál"]} />
          </Group>
          <Group label="Akce" w={212}>
            <Big w={54} icon={<DeleteIcon />} lines={["Odstranit"]} />
            <Big w={60} icon={<MoveIcon />} lines={["Přesunout", "do složky"]} menu />
            <Big w={50} icon={<RuleIcon />} lines={["Vytvořit", "pravidlo"]} />
            <Big w={40} icon={<OtherActionsIcon />} lines={["Jiné", "akce"]} menu />
          </Group>
          <Group label="Nevyžádaná pošta" w={242} launcher>
            <Big w={62} icon={<BlockSenderIcon />} lines={["Blokovat", "odesílatele"]} />
            <SmallColumn $pad={10} $gap={13}>
              <SmallButton>
                <SafeListIcon />
                <span>Seznamy bezpečných adres<Caret /></span>
              </SmallButton>
              <SmallButton disabled><NotJunkIcon />Není nevyžádaná pošta</SmallButton>
            </SmallColumn>
          </Group>
          <Group label="Možnosti" w={191} launcher>
            <Big w={58} icon={<CategoriesIcon />} lines={["Zařadit do", "kategorií"]} menu />
            <Big w={56} icon={<FlagIcon />} lines={["Zpracovat", ""]} menu />
            <Big w={68} icon={<ReadMailIcon />} lines={["Označit jako", "nepřečtené"]} />
          </Group>
          <Group label="Najít" w={97}>
            <SmallColumn $pad={2} $gap={6}>
              <SmallButton disabled><FindIcon />Najít</SmallButton>
              <SmallButton><RelatedIcon /><span>Související<Caret /></span></SmallButton>
              <SmallButton disabled><SelectIcon /><span>Vybrat<Caret $dim /></span></SmallButton>
            </SmallColumn>
          </Group>
          <Group label="OneNote" w={104}>
            <Big w={96} icon={<OneNoteIcon />} lines={["Odeslat do", "aplikace OneNote"]} />
          </Group>
        </Ribbon>
      </RibbonBack>

      <PrintRow>
        <PrintButton $w={147} $default><PrinterIcon /><span>Tisk <u>f</u>axu...</span></PrintButton>
        <PrintButton $w={139}><PrinterIcon /><span>Tisk p<u>r</u>otokolu...</span></PrintButton>
        <PrintButton $w={199}><PrinterIcon /><span><u>T</u>isk faxu a protokolu...</span></PrintButton>
      </PrintRow>

      <ToolBar role="toolbar" aria-label="Zobrazení">
        {viewTools.map((items, i) => (
          <React.Fragment key={i}>
            <Tools items={items} />
            <Divider />
          </React.Fragment>
        ))}
        <Combo $w={63}>
          <select aria-label="Stránka" defaultValue="1/2">
            <option>1/2</option>
            <option>2/2</option>
          </select>
          <span><ComboArrow /></span>
        </Combo>
        <Tools items={pageTools[0]} />
        <Divider />
        <Tools items={pageTools[1]} />
      </ToolBar>
      <ToolBar role="toolbar" aria-label="Kreslení">
        <Tools items={drawTools} pressed="Kreslení" />
        <Divider />
        <Combo $w={95}>
          <select aria-label="Typ razítka">
            <option></option>
          </select>
          <span><ComboArrow /></span>
        </Combo>
        <Tools items={stampTools} />
        <Divider />
      </ToolBar>

      <Workspace>
        <ThumbPane>
          <Thumb $on aria-label="Stránka 1"><FirstPageArt /></Thumb>
          <Thumb aria-label="Stránka 2"><SecondPageArt /></Thumb>
        </ThumbPane>
        <Viewer>
          <Paper>
            <FaxHeader>
              <span>11.9.2009</span>
              <span>11:09</span>
              <span>DATASYS</span>
              <span>FaxChange</span>
              <PageNumber><SheetIcon />1</PageNumber>
            </FaxHeader>
            <FaxBody>
              <BodyLeft>
                <ScanMarks />
                <Logo>
                  <LogoFax>F</LogoFax>
                  <LogoChange>GE</LogoChange>
                  <Trademark>™</Trademark>
                </Logo>
                <FrameLeft>{"Od:  Roun Jiří"}</FrameLeft>
              </BodyLeft>
              <FrameRight>
                <FaxTitle>Faxová zpráva</FaxTitle>
                <Recipient>
                  <dt>Komu:</dt>
                  <dd>Jan Fax</dd>
                  <dd>Faxov</dd>
                </Recipient>
              </FrameRight>
            </FaxBody>
          </Paper>
        </Viewer>
      </Workspace>

      <Dialog role="dialog" aria-label="Uložit změny?">
        <DialogTitle>
          Uložit změny?
          <CloseButton aria-label="Zavřít"><CloseIcon /></CloseButton>
        </DialogTitle>
        <DialogContent>
          <QuestionIcon />
          <div>
            <p>Fax byl změněn, chcete uložit změny?</p>
            <p>
              Pokud chcete tento fax přeposlat dále
              <br />
              {'faxem, stiskněte \\"Uložit="" jako=""'}
              <br />
              {'fax=""\\".'}
            </p>
          </div>
        </DialogContent>
        <DialogButtons>
          <DialogButton $default>Ano</DialogButton>
          <DialogButton>Ne</DialogButton>
          <DialogButton>Uložit jako fax</DialogButton>
        </DialogButtons>
      </Dialog>
    </Window>
  );
}
